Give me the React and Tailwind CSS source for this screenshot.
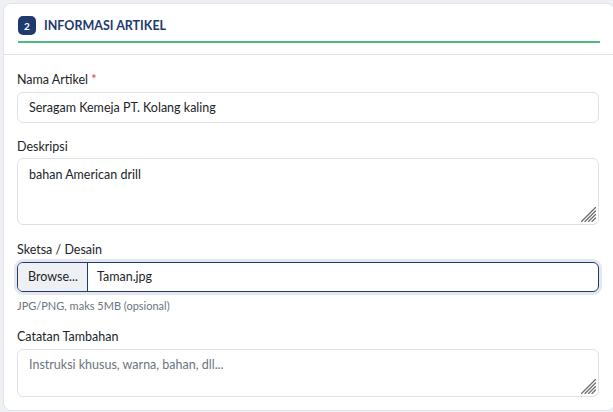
import React from "react";

function Grip() {
  return (
    <svg className="absolute right-[3px] bottom-[3px] pointer-events-none" width="15" height="15" viewBox="0 0 15 15">
      <g stroke="#6b6b6b" strokeWidth="1.2" strokeLinecap="round">
        <line x1="14.5" y1="0.5" x2="0.5" y2="14.5" />
        <line x1="14.5" y1="4" x2="4" y2="14.5" />
        <line x1="14.5" y1="7.5" x2="7.5" y2="14.5" />
        <line x1="14.5" y1="11" x2="11" y2="14.5" />
      </g>
    </svg>
  );
}

export default function App() {
  const font = { fontFamily: '"Segoe UI", Lato, "Noto Sans", sans-serif' };
  return (
    <div className="w-[613px] h-[412px] overflow-hidden bg-[#eef0f3] pt-[3px] pl-[3px]" style={font}>
      <div className="w-[612px] h-[408px] bg-white border border-[#e2e4e9] rounded-lg">
        <div className="px-[14px] pt-[12px] pb-[11px] border-b border-[#dee1e6]">
          <div className="flex items-center gap-[8px] pb-[6px] border-b-2 border-[#4cba7f]">
            <span className="w-[18px] h-[19px] rounded-[5px] bg-[#1e3a6e] text-white text-[10px] font-bold flex items-center justify-center leading-none">2</span>
            <span className="text-[12.5px] font-bold text-[#1e3a6e] leading-[19px]">INFORMASI ARTIKEL</span>
          </div>
        </div>
        <div className="px-[13px] pt-[16px] text-[12.5px] text-[#212529]">
          <label className="block leading-[18px] mb-[3px]">
            Nama Artikel <span className="text-[#dc3545]">*</span>
          </label>
          <input
            className="block w-[582px] h-[31px] px-[11px] border border-[#dee2e6] rounded-[6px] outline-none text-[12.5px] text-[#212529]"
            defaultValue="Seragam Kemeja PT. Kolang kaling"
            style={font}
          />
          <label className="block leading-[18px] mt-[15px] mb-[2px]">Deskripsi</label>
          <div className="relative w-[582px]">
            <textarea
              className="block w-[582px] h-[67px] px-[11px] py-[6px] border border-[#dee2e6] rounded-[6px] outline-none resize-none text-[12.5px] leading-[19px] text-[#212529]"
              defaultValue="bahan American drill"
              style={font}
            />
            <Grip />
          </div>
          <label className="block leading-[18px] mt-[16px] mb-[3px]">Sketsa / Desain</label>
          <div className="flex w-[582px] h-[30px] border border-[#1e3a6e] rounded-[6px] overflow-hidden shadow-[0_0_0_3px_rgba(30,58,110,0.12)]">
            <div className="w-[70px] bg-[#eef0f3] border-r border-[#1e3a6e] flex items-center pl-[10px] text-[12.5px]">Browse...</div>
            <div className="flex items-center pl-[9px] text-[12.5px]">Taman.jpg</div>
          </div>
          <div className="text-[11px] text-[#6c757d] leading-[15px] mt-[6px]">JPG/PNG, maks 5MB (opsional)</div>
          <label className="block leading-[18px] mt-[15px] mb-[3px]">Catatan Tambahan</label>
          <div className="relative w-[582px]">
            <textarea
              className="block w-[582px] h-[48px] px-[11px] py-[5px] border border-[#dee2e6] rounded-[6px] outline-none resize-none text-[12.5px] leading-[19px] text-[#212529] placeholder:text-[#6c757d]"
              placeholder="Instruksi khusus, warna, bahan, dll..."
              style={font}
            />
            <Grip />
          </div>
        </div>
      </div>
    </div>
  );
}
